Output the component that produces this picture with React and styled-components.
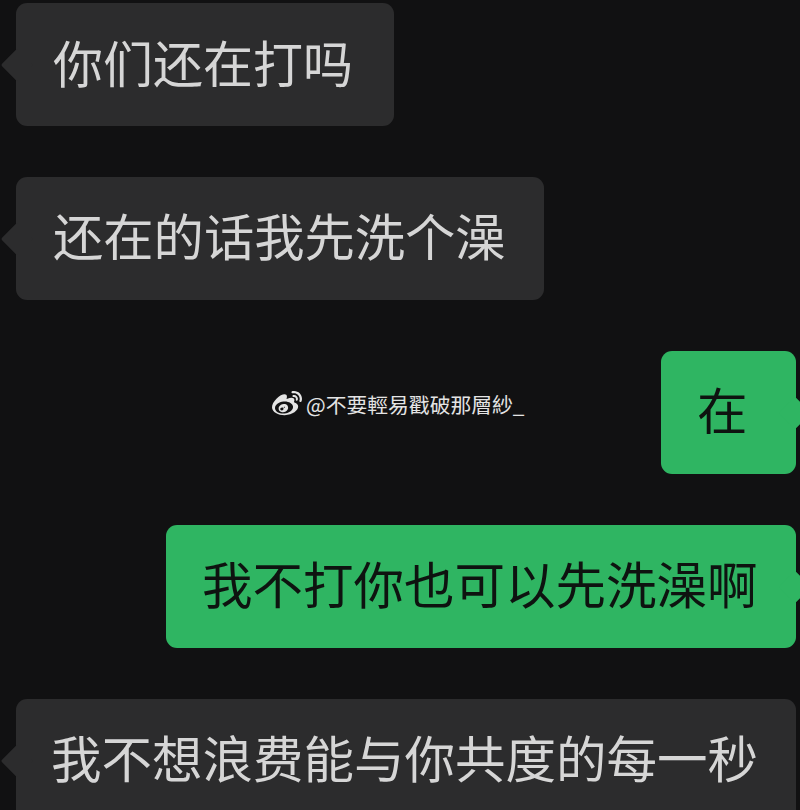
import React from "react";
import styled, { createGlobalStyle } from "styled-components";
import { FaWeibo } from "react-icons/fa";

const Global = createGlobalStyle`
  html, body {
    margin: 0;
    padding: 0;
    background: #111112;
  }
`;

const Page = styled.main`
  position: relative;
  width: 800px;
  height: 810px;
  overflow: hidden;
  box-sizing: border-box;
  padding: 3px 4px 0 16px;
  display: flex;
  flex-direction: column;
  gap: 51px;
  background: #111112;
  font-family: "Noto Sans CJK SC", "Noto Sans", sans-serif;
`;

const Row = styled.div`
  display: flex;
  flex-shrink: 0;
  justify-content: ${(p) => (p.$mine ? "flex-end" : "flex-start")};
`;

const Bubble = styled.div`
  position: relative;
  box-sizing: border-box;
  width: ${(p) => p.$width}px;
  height: 123px;
  padding: 0 0 8px ${(p) => p.$inset}px;
  display: flex;
  align-items: center;
  border-radius: 11px;
  font-size: ${(p) => p.$size}px;
  font-weight: 400;
  line-height: 1;
  white-space: nowrap;
  background: ${(p) => (p.$mine ? "#2fb562" : "#2c2c2d")};
  color: ${(p) => (p.$mine ? "#0e1310" : "#d6d6d6")};

  &::before {
    content: "";
    position: absolute;
    top: 50%;
    width: 26px;
    height: 26px;
    border-radius: 2px;
    background: inherit;
    transform: translateY(-50%) rotate(45deg) scale(0.88);
    ${(p) => (p.$mine ? "right: -12px;" : "left: -12px;")}
  }
`;

const BubbleText = styled.span`
  position: relative;
`;

const Watermark = styled.div`
  position: absolute;
  left: 272px;
  top: 389px;
  display: flex;
  align-items: center;
  gap: 4px;
  height: 30px;
  color: #e4e4e4;
  font-size: 20.8px;
  font-weight: 400;
  font-family: "Noto Sans CJK TC", "Noto Sans", sans-serif;
  white-space: nowrap;
`;

const messages = [
  { text: "你们还在打吗", size: 50, width: 378, inset: 37 },
  { text: "还在的话我先洗个澡", size: 50.3, width: 528, inset: 37 },
  { text: "在", mine: true, size: 50.5, width: 135, inset: 36 },
  { text: "我不打你也可以先洗澡啊", mine: true, size: 50.5, width: 630, inset: 36 },
  { text: "我不想浪费能与你共度的每一秒", size: 50.5, width: 780, inset: 35 },
];

export default function App() {
  return (
    <Page>
      <Global />
      {messages.map((m) => (
        <Row key={m.text} $mine={m.mine}>
          <Bubble $mine={m.mine} $size={m.size} $width={m.width} $inset={m.inset}>
            <BubbleText>{m.text}</BubbleText>
          </Bubble>
        </Row>
      ))}
      <Watermark>
        <FaWeibo size={30} />
        <span>@不要輕易戳破那層紗_</span>
      </Watermark>
    </Page>
  );
}
